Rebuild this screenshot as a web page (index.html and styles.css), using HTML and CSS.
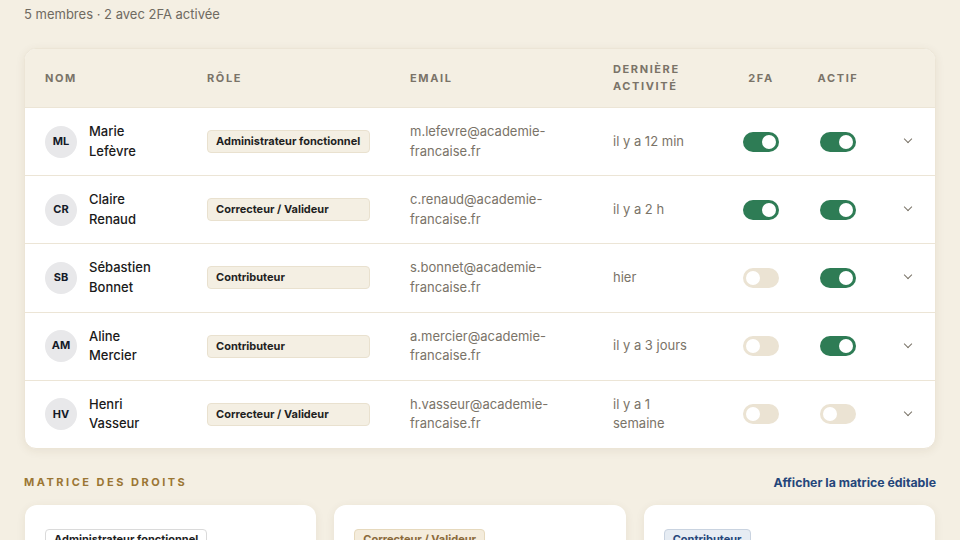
FILE: index.html
```html
<!DOCTYPE html>
<html lang="fr">
<head>
    <meta charset="UTF-8">
    <meta name="viewport" content="width=device-width, initial-scale=1.0">
    <title>Membres</title>
    <link rel="stylesheet" href="styles.css">
</head>
<body>

    <p class="resume">5 membres · 2 avec 2FA activée</p>

    <!-- Tableau des membres -->
    <div class="carte-membres">
        <div class="ligne entete">
            <div>Nom</div>
            <div>Rôle</div>
            <div>Email</div>
            <div>Dernière<br>activité</div>
            <div class="centre">2FA</div>
            <div class="centre">Actif</div>
            <div></div>
        </div>

        <div class="ligne">
            <div class="membre"><span class="avatar">ML</span><span class="nom">Marie<br>Lefèvre</span></div>
            <div><span class="role">Administrateur fonctionnel</span></div>
            <div class="gris">m.lefevre@academie-<br>francaise.fr</div>
            <div class="gris">il y a 12 min</div>
            <div class="centre"><span class="bascule on"></span></div>
            <div class="centre"><span class="bascule on"></span></div>
            <div class="centre"><span class="chevron"></span></div>
        </div>

        <div class="ligne">
            <div class="membre"><span class="avatar">CR</span><span class="nom">Claire<br>Renaud</span></div>
            <div><span class="role">Correcteur / Valideur</span></div>
            <div class="gris">c.renaud@academie-<br>francaise.fr</div>
            <div class="gris">il y a 2 h</div>
            <div class="centre"><span class="bascule on"></span></div>
            <div class="centre"><span class="bascule on"></span></div>
            <div class="centre"><span class="chevron"></span></div>
        </div>

        <div class="ligne">
            <div class="membre"><span class="avatar">SB</span><span class="nom">Sébastien<br>Bonnet</span></div>
            <div><span class="role">Contributeur</span></div>
            <div class="gris">s.bonnet@academie-<br>francaise.fr</div>
            <div class="gris">hier</div>
            <div class="centre"><span class="bascule"></span></div>
            <div class="centre"><span class="bascule on"></span></div>
            <div class="centre"><span class="chevron"></span></div>
        </div>

        <div class="ligne">
            <div class="membre"><span class="avatar">AM</span><span class="nom">Aline<br>Mercier</span></div>
            <div><span class="role">Contributeur</span></div>
            <div class="gris">a.mercier@academie-<br>francaise.fr</div>
            <div class="gris">il y a 3 jours</div>
            <div class="centre"><span class="bascule"></span></div>
            <div class="centre"><span class="bascule on"></span></div>
            <div class="centre"><span class="chevron"></span></div>
        </div>

        <div class="ligne">
            <div class="membre"><span class="avatar">HV</span><span class="nom">Henri<br>Vasseur</span></div>
            <div><span class="role">Correcteur / Valideur</span></div>
            <div class="gris">h.vasseur@academie-<br>francaise.fr</div>
            <div class="gris">il y a 1<br>semaine</div>
            <div class="centre"><span class="bascule"></span></div>
            <div class="centre"><span class="bascule"></span></div>
            <div class="centre"><span class="chevron"></span></div>
        </div>
    </div>

    <!-- Matrice des droits -->
    <div class="titre-matrice">
        <h3>Matrice des droits</h3>
        <a href="#">Afficher la matrice éditable</a>
    </div>

    <div class="cartes-roles">
        <div class="carte-role"><span class="badge admin">Administrateur fonctionnel</span></div>
        <div class="carte-role"><span class="badge correcteur">Correcteur / Valideur</span></div>
        <div class="carte-role"><span class="badge contributeur">Contributeur</span></div>
    </div>

</body>
</html>
```

FILE: styles.css
```css
body {
    font-family: Inter, 'Liberation Sans', Arial, sans-serif;
    background-color: #f4efe3;
    margin: 0;
    padding: 6px 24px 0 24px;
    color: #1f1f1f;
}

.resume {
    margin: 0;
    font-size: 13px;
    line-height: 17px;
    color: #6f6a61;
}

/* Tableau des membres */
.carte-membres {
    margin: 25px 0 0 0;
    background-color: #fff;
    border: 1px solid #ece5d6;
    border-radius: 12px;
    box-shadow: 0 2px 10px rgba(90, 70, 30, 0.08);
    overflow: hidden;
}

.ligne {
    display: grid;
    grid-template-columns: 162px 203px 203px 135px 66px 88px 1fr;
    align-items: center;
    height: 67.2px;
    border-top: 1px solid #ece5d6;
    font-size: 13px;
    line-height: 19.5px;
}

.ligne > div {
    padding-left: 20px;
}

.ligne > div.centre {
    padding-left: 0;
    display: flex;
    justify-content: center;
}

.entete {
    height: 58px;
    border-top: none;
    background-color: #f4efe3;
    font-size: 11px;
    line-height: 17px;
    font-weight: 700;
    letter-spacing: 1.6px;
    text-transform: uppercase;
    color: #7a7368;
}

.membre {
    display: flex;
    align-items: center;
    gap: 12px;
}

.avatar {
    width: 32px;
    height: 32px;
    border-radius: 50%;
    background-color: #e8e8ea;
    color: #141a28;
    font-size: 11px;
    font-weight: 700;
    display: flex;
    align-items: center;
    justify-content: center;
    flex-shrink: 0;
}

.nom {
    font-weight: 500;
    color: #1a1a1a;
}

.role {
    display: block;
    width: 163px;
    box-sizing: border-box;
    padding: 0 8px;
    height: 23px;
    line-height: 21px;
    font-size: 11px;
    font-weight: 700;
    color: #1f1f1f;
    background-color: #f4efe3;
    border: 1px solid #e9e1cf;
    border-radius: 4px;
}

.gris {
    color: #7a7368;
}

/* Interrupteurs */
.bascule {
    position: relative;
    width: 36px;
    height: 20px;
    border-radius: 10px;
    background-color: #ebe3d3;
}

.bascule::after {
    content: "";
    position: absolute;
    top: 3px;
    left: 3px;
    width: 14px;
    height: 14px;
    border-radius: 50%;
    background-color: #fff;
}

.bascule.on {
    background-color: #2e7c55;
}

.bascule.on::after {
    left: 19px;
}

.chevron {
    width: 5px;
    height: 5px;
    border-right: 1.2px solid #7a7368;
    border-bottom: 1.2px solid #7a7368;
    transform: rotate(45deg);
    margin-top: -5px;
    margin-left: -2px;
}

/* Matrice des droits */
.titre-matrice {
    display: flex;
    justify-content: space-between;
    align-items: center;
    margin-top: 26px;
}

.titre-matrice h3 {
    margin: 0;
    font-size: 11px;
    font-weight: 700;
    letter-spacing: 2.5px;
    text-transform: uppercase;
    color: #9b7634;
}

.titre-matrice a {
    font-size: 12.3px;
    font-weight: 700;
    color: #24467a;
    text-decoration: none;
}

.cartes-roles {
    display: grid;
    grid-template-columns: 1fr 1fr 1fr;
    gap: 18px;
    margin: 15px 1px 0 1px;
}

.carte-role {
    background-color: #fff;
    border-radius: 12px;
    box-shadow: 0 2px 10px rgba(90, 70, 30, 0.08);
    padding: 22px 20px;
    height: 120px;
}

.badge {
    display: inline-block;
    font-size: 11px;
    font-weight: 700;
    line-height: 17px;
    padding: 1px 8px;
    border-radius: 4px;
    border: 1px solid #ddd;
}

.badge.admin {
    background-color: #fff;
    color: #1f1f1f;
    border-color: #dadada;
}

.badge.correcteur {
    background-color: #f4ecdc;
    color: #8a6a3a;
    border-color: #e6d9bd;
}

.badge.contributeur {
    background-color: #e6ecf3;
    color: #24467a;
    border-color: #c9d3e0;
}
```
